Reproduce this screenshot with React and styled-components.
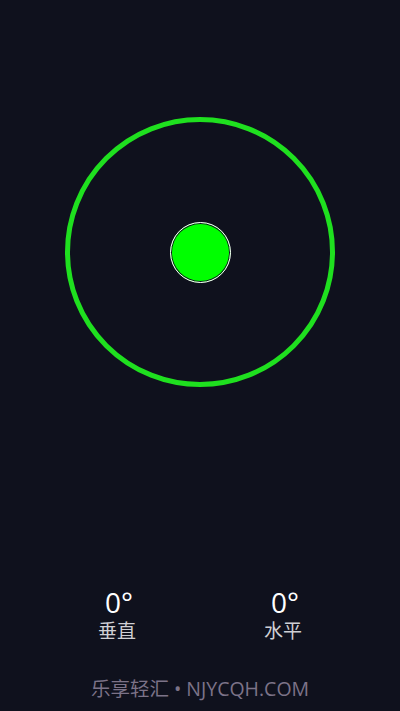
import React from "react";
import styled, { createGlobalStyle } from "styled-components";

const GlobalStyle = createGlobalStyle`
    html, body {
        margin: 0;
        padding: 0;
        background-color: #0f111d;
    }
    body {
        font-family: "Open Sans", "Noto Sans CJK SC", sans-serif;
    }
`;

const Page = styled.div`
    height: 711px;
    display: flex;
    flex-direction: column;
    align-items: center;
    background-color: #0f111d;
    color: #fff;
`;

const Ring = styled.div`
    margin-top: 117px;
    width: 270px;
    height: 270px;
    box-sizing: border-box;
    border: 5.5px solid #1fe01f;
    border-radius: 50%;
    display: flex;
    align-items: center;
    justify-content: center;
`;

const Bubble = styled.div`
    width: 61px;
    height: 61px;
    box-sizing: border-box;
    border-radius: 50%;
    background-color: #00ff00;
    border: 1px solid #ffffff;
    box-shadow: inset 0 0 0 1px #0f111d;
`;

const Readouts = styled.div`
    margin-top: auto;
    width: 100%;
    display: grid;
    grid-template-columns: 1fr 1fr;
    padding: 0 34px;
    box-sizing: border-box;
`;

const Readout = styled.div`
    display: flex;
    flex-direction: column;
    align-items: center;
`;

const Value = styled.div`
    font-size: 28px;
    line-height: 32px;
    color: #ffffff;
    padding-left: 4px;
`;

const Label = styled.div`
    font-size: 19px;
    line-height: 26px;
    color: #cfcfd4;
`;

const Footer = styled.div`
    margin: 32px 0 9px;
    font-size: 19.5px;
    line-height: 26px;
    color: #7c7388;
`;

const readings = [
    { value: "0°", label: "垂直" },
    { value: "0°", label: "水平" },
];

export default () => {
    return (
        <React.Fragment>
            <GlobalStyle />
            <Page>
                <Ring>
                    <Bubble />
                </Ring>
                <Readouts>
                    {readings.map((r) => (
                        <Readout key={r.label}>
                            <Value>{r.value}</Value>
                            <Label>{r.label}</Label>
                        </Readout>
                    ))}
                </Readouts>
                <Footer>乐享轻汇 • NJYCQH.COM</Footer>
            </Page>
        </React.Fragment>
    );
};
